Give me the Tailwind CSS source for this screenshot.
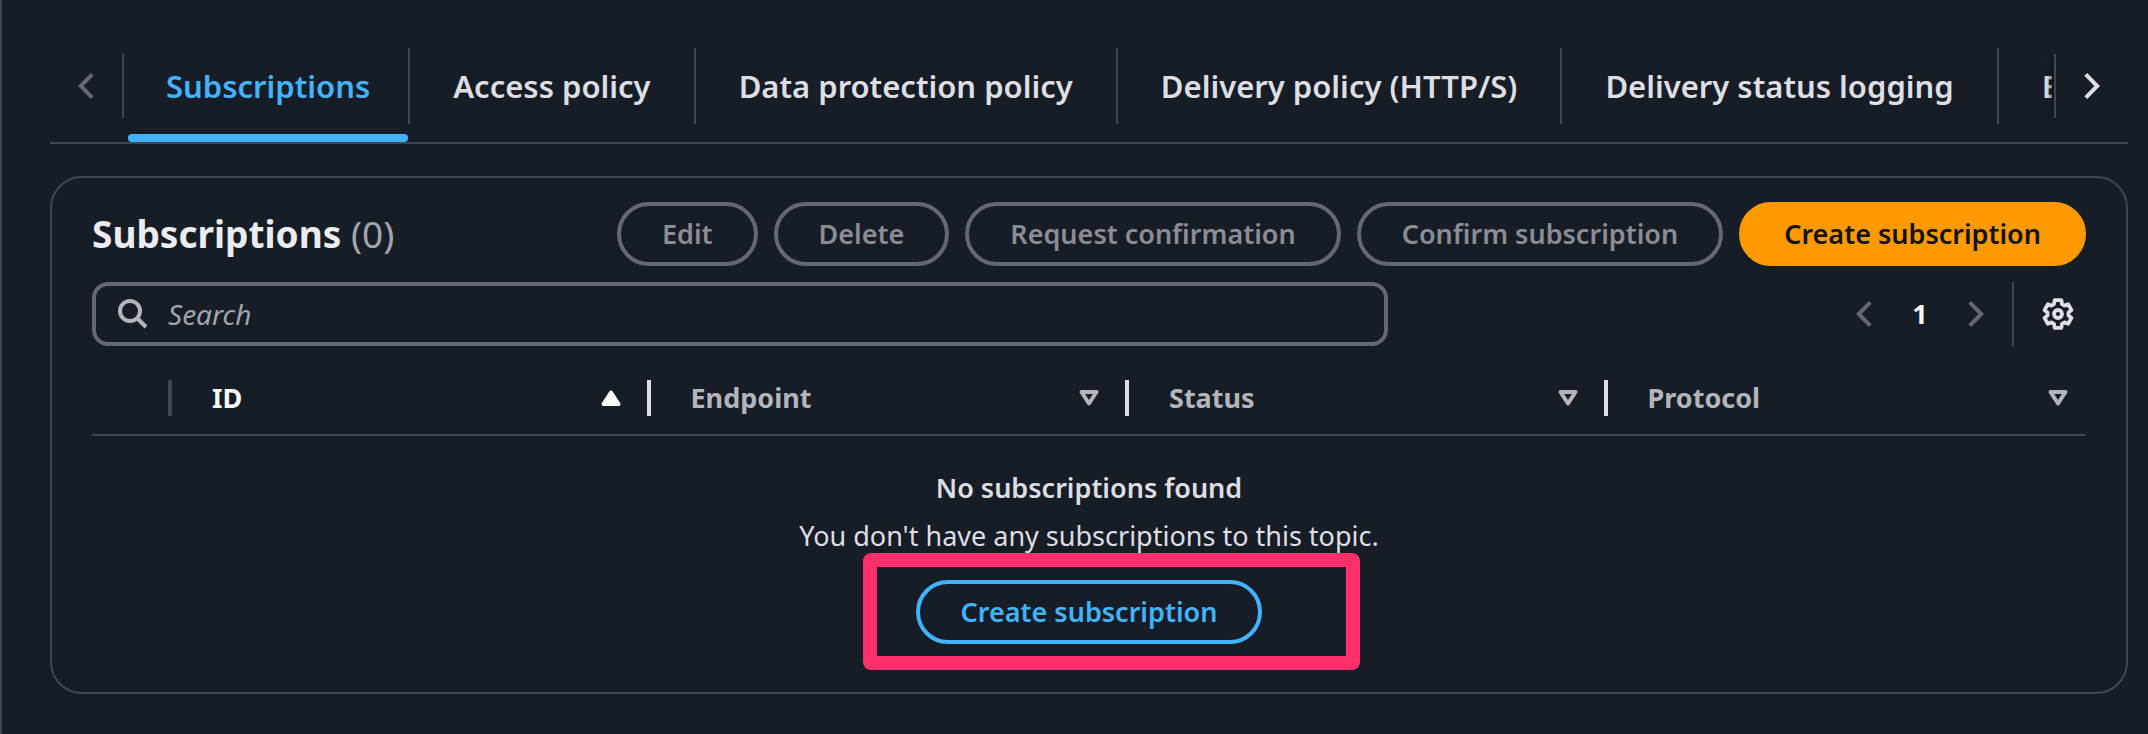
<!DOCTYPE html>
<html lang="en">
<head>
  <meta charset="UTF-8" />
  <meta name="viewport" content="width=device-width, initial-scale=1" />
  <title>Topic subscriptions</title>
  <script src="https://cdn.jsdelivr.net/npm/@tailwindcss/browser@4"></script>
</head>

<body class="min-h-screen border-l-2 border-[#424650] bg-[#161d26] pt-12 pr-5 pb-10 pl-12 font-['Noto_Sans','Open_Sans',sans-serif] text-[27px] leading-10 text-[#dedee3]">

  <!-- ── tabs ───────────────────────────────────────────────────────────── -->
  <nav class="flex items-start border-b-2 border-[#424650]">
    <button disabled aria-label="Scroll left" class="mt-1.5 mr-1 flex h-16 w-[74px] shrink-0 items-center justify-center border-r-2 border-[#424650] text-[#656871]">
      <svg class="h-[26px] w-4" viewBox="0 0 16 26" fill="none" stroke="currentColor" stroke-width="4"><path d="M14.2 1.4 2.8 13l11.4 11.6" /></svg>
    </button>
    <div role="tablist" class="flex min-w-0 flex-1 overflow-hidden text-[31px] font-semibold whitespace-nowrap">
      <div class="flex shrink-0 flex-col gap-2.5">
        <button role="tab" aria-selected="true" class="h-[76px] border-r-2 border-[#424650] px-[38px] text-[#42b4ff]">Subscriptions</button>
        <div class="mr-0.5 h-2 rounded-full bg-[#42b4ff]"></div>
      </div>
      <button role="tab" class="h-[76px] shrink-0 border-r-2 border-[#424650] px-[43px]">Access policy</button>
      <button role="tab" class="h-[76px] shrink-0 border-r-2 border-[#424650] px-[43px]">Data protection policy</button>
      <button role="tab" class="h-[76px] shrink-0 border-r-2 border-[#424650] px-[43px]">Delivery policy (HTTP/S)</button>
      <button role="tab" class="h-[76px] shrink-0 border-r-2 border-[#424650] px-[43px]">Delivery status logging</button>
      <button role="tab" class="h-[76px] shrink-0 px-[43px]">E</button>
    </div>
    <button aria-label="Scroll right" class="z-10 mt-1.5 ml-0.5 flex h-16 w-[74px] shrink-0 items-center justify-center border-l-2 border-[#424650] shadow-[-8px_0_6px_-6px_#0f141a]">
      <svg class="h-[26px] w-4" viewBox="0 0 16 26" fill="none" stroke="currentColor" stroke-width="4"><path d="M1.8 1.4 13.2 13 1.8 24.6" /></svg>
    </button>
  </nav>

  <!-- ── subscriptions card ─────────────────────────────────────────────── -->
  <main class="mt-8 rounded-[32px] border-2 border-[#424650] px-10 pt-6 pb-12">
    <div class="flex items-center justify-between">
      <h2 class="text-[37px] font-bold text-[#ebebf0]">Subscriptions <span class="font-normal text-[#a4a4ad]">(0)</span></h2>
      <div class="flex gap-4 font-semibold">
        <button disabled class="h-16 rounded-full border-4 border-[#656871] px-[41px] text-[#8c8c94]">Edit</button>
        <button disabled class="h-16 rounded-full border-4 border-[#656871] px-[41px] text-[#8c8c94]">Delete</button>
        <button disabled class="h-16 rounded-full border-4 border-[#656871] px-[41px] text-[#8c8c94]">Request confirmation</button>
        <button disabled class="h-16 rounded-full border-4 border-[#656871] px-[41px] text-[#8c8c94]">Confirm subscription</button>
        <button class="h-16 rounded-full border-4 border-[#ff9900] bg-[#ff9900] px-[41px] text-[#0f141a]">Create subscription</button>
      </div>
    </div>

    <div class="mt-4 flex items-center justify-between">
      <label class="flex h-16 w-[65%] items-center gap-5 rounded-2xl border-4 border-[#656871] px-[22px]">
        <svg class="size-[30px] shrink-0 text-[#b4b4bb]" viewBox="0 0 30 30" fill="none" stroke="currentColor" stroke-width="4"><circle cx="12" cy="12" r="10" /><path d="m18.5 18.5 9.5 9.5" /></svg>
        <input type="search" aria-label="Search" placeholder="Search" class="min-w-0 flex-1 bg-transparent text-[28px] italic outline-none placeholder:text-[#a4a4ad]" />
      </label>
      <div class="flex items-center">
        <button disabled aria-label="Previous page" class="flex h-16 w-14 items-center justify-center text-[#656871]">
          <svg class="h-[26px] w-4" viewBox="0 0 16 26" fill="none" stroke="currentColor" stroke-width="4"><path d="M14.2 1.4 2.8 13l11.4 11.6" /></svg>
        </button>
        <button aria-current="page" class="h-16 w-14 font-bold text-[#f9f9fa]">1</button>
        <button disabled aria-label="Next page" class="flex h-16 w-14 items-center justify-center text-[#656871]">
          <svg class="h-[26px] w-4" viewBox="0 0 16 26" fill="none" stroke="currentColor" stroke-width="4"><path d="M1.8 1.4 13.2 13 1.8 24.6" /></svg>
        </button>
        <div class="mr-4 ml-2 h-16 w-0.5 bg-[#424650]"></div>
        <button aria-label="Preferences" class="flex h-16 w-14 items-center justify-center">
          <svg class="size-8" viewBox="0 0 32 32" fill="none" stroke="currentColor" stroke-width="3.8" stroke-linejoin="round">
            <path d="M12.6 2.2h6.8L20 6.2l2.5 1.4 3.6-1.3 3.4 5.8-3 2.4v3l3 2.4-3.4 5.8-3.6-1.3-2.5 1.4-.6 4h-6.8l-.6-4-2.5-1.4-3.6 1.3-3.4-5.8 3-2.4v-3l-3-2.4 3.4-5.8 3.6 1.3L12 6.2z" />
            <circle cx="16" cy="16" r="4" />
          </svg>
        </button>
      </div>
    </div>

    <table class="mt-4 w-full table-fixed">
      <thead>
        <tr class="border-b-2 border-[#424650] text-left text-[#b4b4bb]">
          <th class="w-20 py-[18px]"><div class="h-9 border-r-4 border-[#424650]"></div></th>
          <th class="py-[18px] font-bold text-[#f9f9fa]">
            <div class="flex h-9 items-center justify-between border-r-4 border-[#dedee3] pr-[26px] pl-10">
              ID
              <svg class="h-4 w-5" viewBox="0 0 20 16" fill="currentColor" stroke="currentColor" stroke-width="4" stroke-linejoin="round"><path d="M10 2.5 17.5 14h-15z" /></svg>
            </div>
          </th>
          <th class="py-[18px] font-bold">
            <div class="flex h-9 items-center justify-between border-r-4 border-[#dedee3] pr-[26px] pl-10">
              Endpoint
              <svg class="h-4 w-5" viewBox="0 0 20 16" fill="none" stroke="currentColor" stroke-width="4" stroke-linejoin="round"><path d="M10 13.5 17.5 2h-15z" /></svg>
            </div>
          </th>
          <th class="py-[18px] font-bold">
            <div class="flex h-9 items-center justify-between border-r-4 border-[#dedee3] pr-[26px] pl-10">
              Status
              <svg class="h-4 w-5" viewBox="0 0 20 16" fill="none" stroke="currentColor" stroke-width="4" stroke-linejoin="round"><path d="M10 13.5 17.5 2h-15z" /></svg>
            </div>
          </th>
          <th class="py-[18px] font-bold">
            <div class="flex h-9 items-center justify-between pr-[18px] pl-10">
              Protocol
              <svg class="h-4 w-5" viewBox="0 0 20 16" fill="none" stroke="currentColor" stroke-width="4" stroke-linejoin="round"><path d="M10 13.5 17.5 2h-15z" /></svg>
            </div>
          </th>
        </tr>
      </thead>
      <tbody>
        <tr>
          <td colspan="5" class="pt-8 text-center">
            <div class="flex flex-col items-center">
              <p class="font-semibold">No subscriptions found</p>
              <p class="mt-2">You don't have any subscriptions to this topic.</p>
              <div class="relative mt-6">
                <button class="block h-16 rounded-full border-4 border-[#42b4ff] px-[41px] font-semibold text-[#42b4ff]">Create subscription</button>
                <!-- highlight around the call to action -->
                <div class="pointer-events-none absolute -top-[27px] -right-[98px] -bottom-[26px] -left-[53px] rounded-lg border-[14px] border-[#ff2f6b]"></div>
              </div>
            </div>
          </td>
        </tr>
      </tbody>
    </table>
  </main>

</body>
</html>
